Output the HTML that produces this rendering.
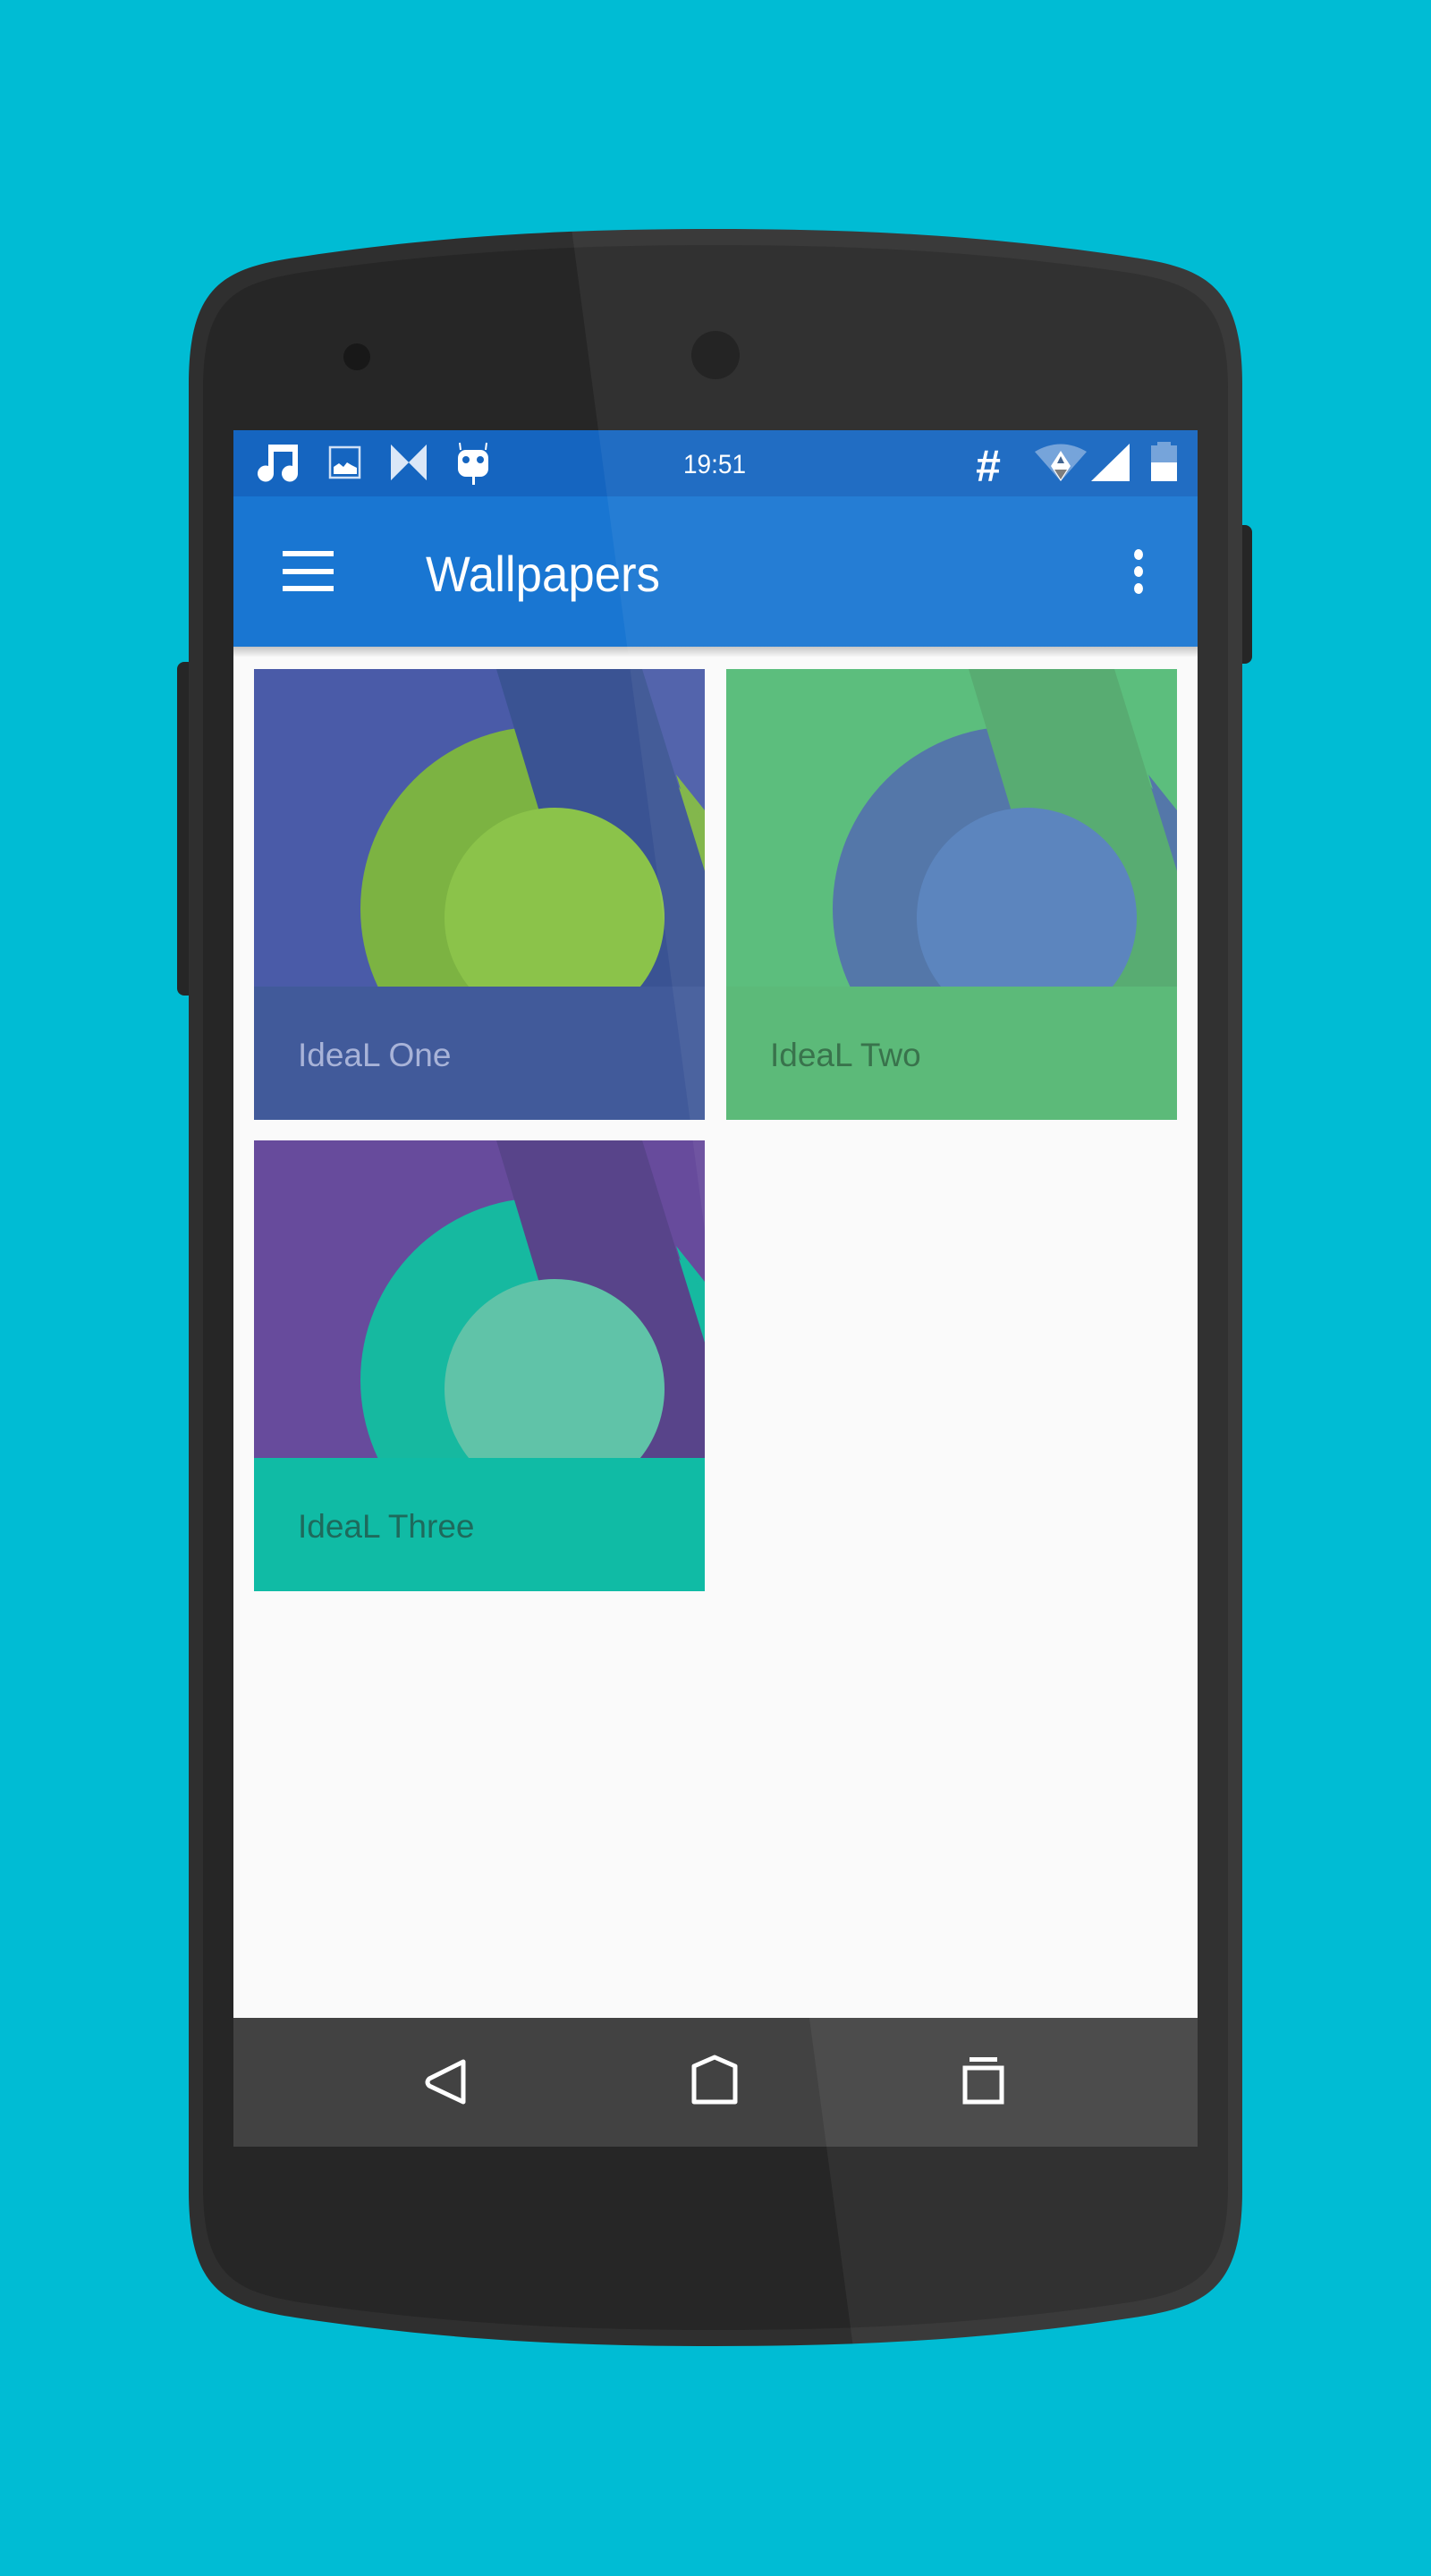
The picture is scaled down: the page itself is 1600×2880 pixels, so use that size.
<!DOCTYPE html>
<html><head><meta charset="utf-8"><style>
html,body{margin:0;padding:0;}
body{width:1600px;height:2880px;background:#00bcd4;position:relative;overflow:hidden;font-family:"Liberation Sans",sans-serif;}
.abs{position:absolute;}
.card{position:absolute;width:504px;height:504px;overflow:hidden;}
.card svg{position:absolute;left:0;top:0;}
.lbl{position:absolute;left:0;top:355px;width:504px;height:149px;}
.lbl span{position:absolute;left:49px;font-size:37px;line-height:1;}
</style></head><body>
<svg class="abs" style="left:0;top:0" width="1600" height="2880">
<rect x="198" y="740" width="20" height="373" rx="8" fill="#262626"/>
<rect x="1380" y="587" width="20" height="155" rx="8" fill="#262626"/>
<path d="M211,430 C211,320 250,300 330,288 C500,262 650,256 799,256 C948,256 1098,262 1268,288 C1348,300 1389,320 1389,430 L1389,2449 C1389,2559 1348,2579 1268,2591 C1098,2617 948,2623 799,2623 C650,2623 500,2617 330,2591 C250,2579 211,2559 211,2449 Z" fill="#2f2f2f"/>
<path d="M227,435 C227,335 262,317 335,305 C505,280 652,274 799,274 C946,274 1093,280 1263,305 C1336,317 1373,335 1373,435 L1373,2444 C1373,2544 1336,2562 1263,2574 C1093,2599 946,2605 799,2605 C652,2605 505,2599 335,2574 C262,2562 227,2544 227,2444 Z" fill="#262626"/>
<ellipse cx="800" cy="397" rx="27" ry="27" fill="#181818"/>
<ellipse cx="399" cy="399" rx="15" ry="15" fill="#181818"/>
</svg>

<div class="abs" style="left:261px;top:481px;width:1078px;height:1919px;background:#fafafa;overflow:hidden;">
  <div class="abs" style="left:0;top:0;width:1078px;height:74px;background:#1565c0;"></div>
  <div class="abs" style="left:0;top:74px;width:1078px;height:168px;background:#1976d2;"></div>
  <div class="abs" style="left:0;top:242px;width:1078px;height:12px;background:linear-gradient(rgba(0,0,0,0.22),rgba(0,0,0,0));"></div>
  <div class="abs" style="left:0;top:1775px;width:1078px;height:144px;background:#424242;"></div>
</div>

<svg class="abs" style="left:0;top:0" width="1600" height="760">
 <g fill="#fff">
  <path d="M300,497 h33 v32 a9,9 0 1 1 -6,-8 v-16 h-21 v24 a9,9 0 1 1 -6,-8 z"/>
 </g>
 <rect x="369" y="500" width="33" height="34" fill="none" stroke="#d0e0f5" stroke-width="2.5"/>
 <path d="M373,530 v-8 l6,-4 l5,4 l4,-5 l5,3 l6,3 v7 z" fill="#fff"/>
 <path d="M437,497 l20,20 l20,-20 v40 l-20,-20 l-20,20 z" fill="#b6cfee"/>
 <path d="M437,497 l20,20 l-20,20 z M477,497 l-20,20 l20,20z" fill="#dbe7f7"/>
 <rect x="512" y="503" width="34" height="30" rx="9" fill="#fff"/>
 <line x1="515" y1="503" x2="514" y2="495" stroke="#fff" stroke-width="2"/>
 <line x1="543" y1="503" x2="544" y2="495" stroke="#fff" stroke-width="2"/>
 <rect x="528" y="533" width="3" height="9" fill="#fff"/>
 <circle cx="521" cy="514" r="4" fill="#1565c0"/><circle cx="537" cy="514" r="4" fill="#1565c0"/>
 <text x="799" y="529" font-size="30" fill="#fff" text-anchor="middle" font-family="Liberation Sans" textLength="70" lengthAdjust="spacingAndGlyphs">19:51</text>
 <text x="1105" y="538" font-size="50" font-weight="bold" fill="#fff" text-anchor="middle" font-family="Liberation Sans">#</text>
 <path d="M1157,505 Q1186,488 1215,505 L1186,538 Z" fill="#6f9fd8"/>
 <path d="M1175,521 L1186,504 L1197,521 L1186,538 Z" fill="#fff"/>
 <path d="M1179,525 L1193,525 L1186,536 Z" fill="#777"/>
 <path d="M1182,518 L1186,510 L1190,518 Z" fill="#3a5d8a"/>
 <path d="M1220,538 L1263,496 L1263,538 Z" fill="#fff"/>
 <rect x="1287" y="498" width="29" height="40" fill="#6f9fd8"/>
 <rect x="1294" y="494" width="15" height="5" fill="#6f9fd8"/>
 <rect x="1287" y="517" width="29" height="21" fill="#fff"/>
 <rect x="316" y="616" width="57" height="6" fill="#fff"/>
 <rect x="316" y="636" width="57" height="6" fill="#fff"/>
 <rect x="316" y="655" width="57" height="6" fill="#fff"/>
 <text x="476" y="661" font-size="56" fill="#fff" font-family="Liberation Sans" textLength="262" lengthAdjust="spacingAndGlyphs">Wallpapers</text>
 <ellipse cx="1273" cy="620" rx="5" ry="6" fill="#fff"/>
 <ellipse cx="1273" cy="639" rx="5" ry="6" fill="#fff"/>
 <ellipse cx="1273" cy="658" rx="5" ry="6" fill="#fff"/>
</svg>

<div class="card" style="left:284px;top:748px;background:#4a5ba8;">
 <svg width="504" height="504">
  <path d="M472,118 L504,158 L504,222 Z" fill="#7cb342"/>
  <circle cx="323" cy="268" r="204" fill="#7cb342"/>
  <path d="M271,0 L434,0 L544,355 L378,355 Z" fill="#3a5393"/>
  <circle cx="336" cy="278" r="123" fill="#8bc34a"/>
 </svg>
 <div class="lbl" style="background:#415a9a;"><span style="top:58px;color:#a8b3d8;">IdeaL One</span></div>
</div>
<div class="card" style="left:812px;top:748px;background:#53bb76;">
 <svg width="504" height="504">
  <path d="M472,118 L504,158 L504,222 Z" fill="#4b70a4"/>
  <circle cx="323" cy="268" r="204" fill="#4b70a4"/>
  <path d="M271,0 L434,0 L544,355 L378,355 Z" fill="#4fa86a"/>
  <circle cx="336" cy="278" r="123" fill="#537ebb"/>
 </svg>
 <div class="lbl" style="background:#53b772;"><span style="top:58px;color:#2e6b42;">IdeaL Two</span></div>
</div>
<div class="card" style="left:284px;top:1275px;background:#674b9c;">
 <svg width="504" height="504">
  <path d="M472,118 L504,158 L504,222 Z" fill="#16b9a0"/>
  <circle cx="323" cy="268" r="204" fill="#16b9a0"/>
  <path d="M271,0 L434,0 L544,355 L378,355 Z" fill="#58448a"/>
  <circle cx="336" cy="278" r="123" fill="#60c3a8"/>
 </svg>
 <div class="lbl" style="background:#10bba5;"><span style="top:58px;color:#1e6a5c;">IdeaL Three</span></div>
</div>

<svg class="abs" style="left:0;top:0" width="1600" height="2880">
 <path d="M518,2305 L518,2350 L480,2332 Q476,2328 480,2324 Z" fill="none" stroke="#fff" stroke-width="5" stroke-linejoin="round"/>
 <path d="M776,2310 L799,2300 L822,2310 L822,2350 L776,2350 Z" fill="none" stroke="#fff" stroke-width="5" stroke-linejoin="round"/>
 <rect x="1079" y="2312" width="41" height="38" fill="none" stroke="#fff" stroke-width="5"/>
 <rect x="1084" y="2300" width="31" height="5" fill="#fff"/>
</svg>

<svg class="abs" style="left:0;top:0;pointer-events:none" width="1600" height="2880">
 <defs><clipPath id="ph"><path d="M211,430 C211,320 250,300 330,288 C500,262 650,256 799,256 C948,256 1098,262 1268,288 C1348,300 1389,320 1389,430 L1389,2449 C1389,2559 1348,2579 1268,2591 C1098,2617 948,2623 799,2623 C650,2623 500,2617 330,2591 C250,2579 211,2559 211,2449 Z"/></clipPath></defs>
 <polygon clip-path="url(#ph)" points="637,240 1400,240 1400,2640 956,2640" fill="#fff" fill-opacity="0.055"/>
</svg>
</body></html>
